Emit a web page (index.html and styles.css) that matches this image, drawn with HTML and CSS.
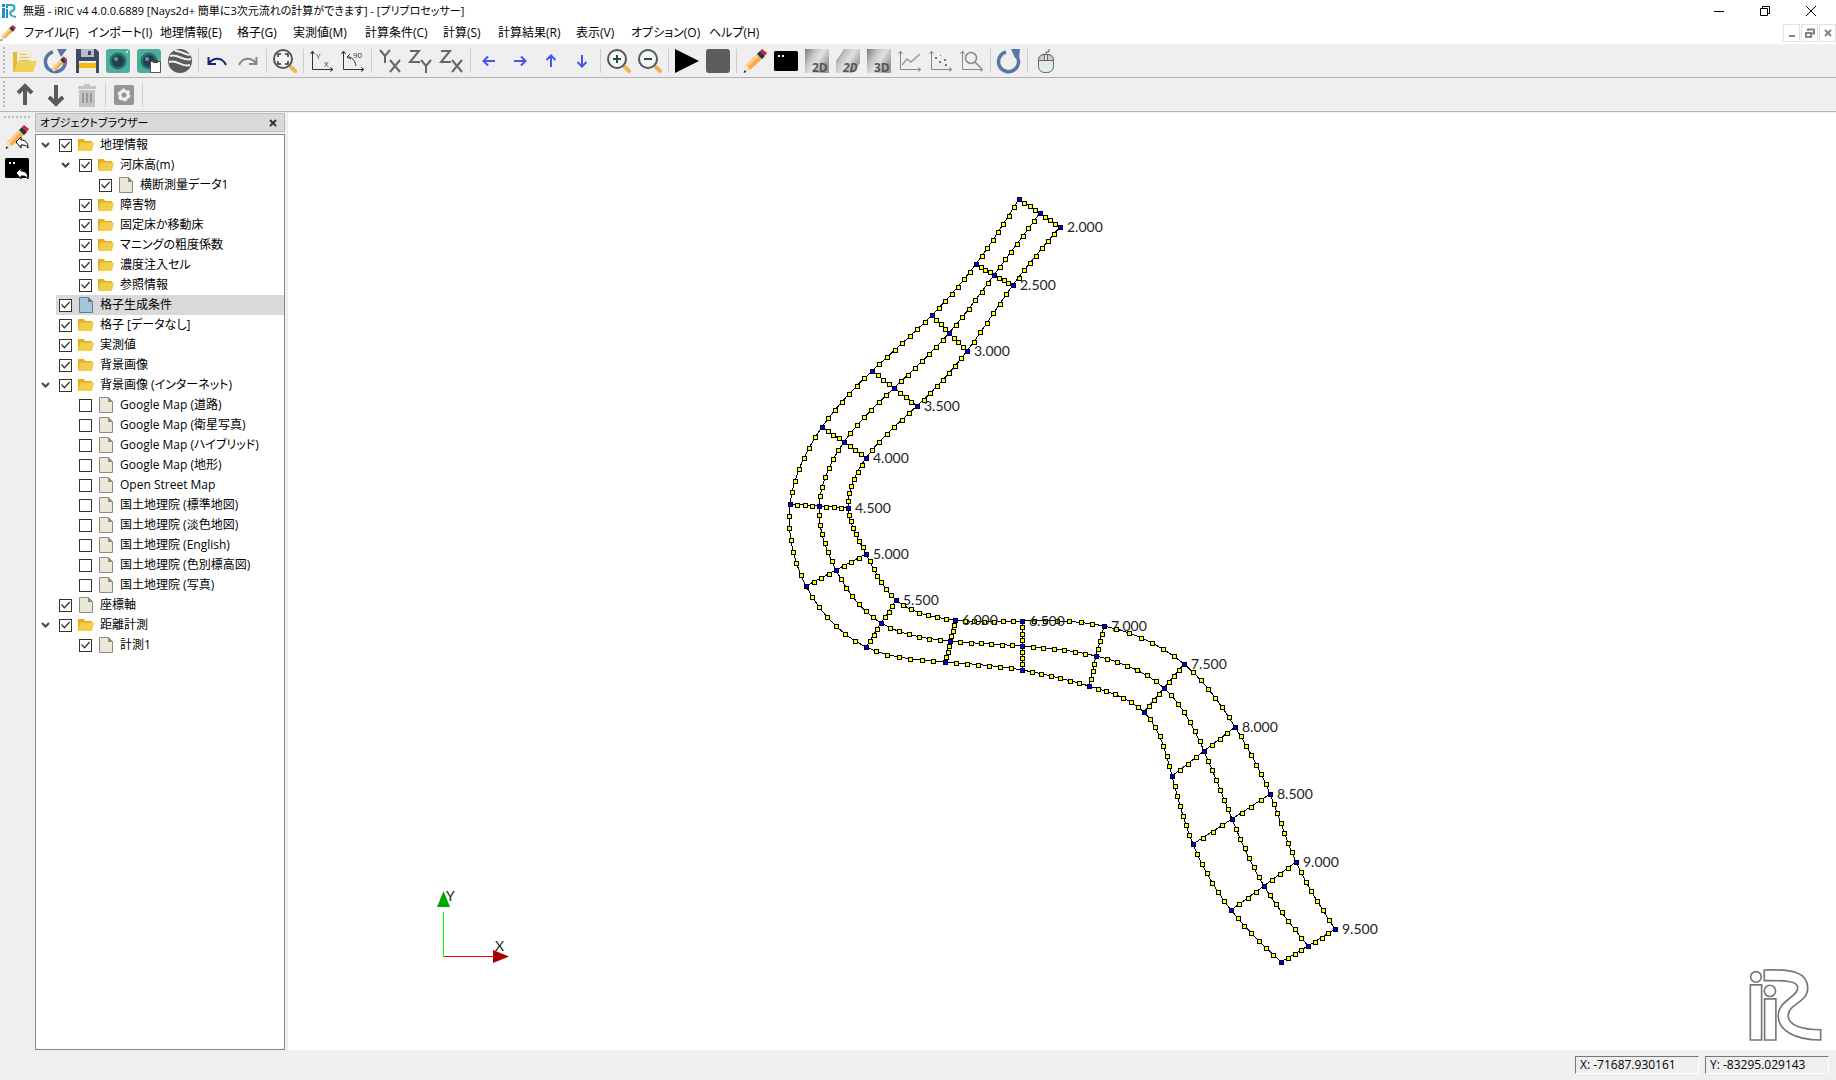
FILE: index.html
```html
<!DOCTYPE html>
<html lang="ja">
<head>
    <meta charset="UTF-8">
    <meta name="viewport" content="width=device-width, initial-scale=1.0">
    <title>無題 - iRIC v4</title>
    <link rel="stylesheet" href="styles.css">
</head>
<body>
    <!-- shared icons -->
    <svg class="defs" aria-hidden="true">
        <defs>
            <linearGradient id="metal" x1="0" y1="0" x2="1" y2="0.6">
                <stop offset="0" stop-color="#777"/><stop offset="0.35" stop-color="#c4c4c4"/>
                <stop offset="0.6" stop-color="#e2e2e2"/><stop offset="1" stop-color="#999"/>
            </linearGradient>
        </defs>
        <symbol id="i-folder" viewBox="0 0 16 16"><path fill="#e8b01c" d="M0 2h6l1 2h7v9H0z"/><path fill="#f0cd4a" d="M2.500 5.500H16L14 14H0z"/></symbol>
        <symbol id="i-file" viewBox="0 0 16 16"><path fill="#ece8d8" stroke="#8c8c80" d="M1.500.5h9l4 4v11h-13z"/><path fill="#8c8c80" d="M10 0l5 5h-5z"/></symbol>
        <symbol id="i-file-blue" viewBox="0 0 16 16"><path fill="#a5c5da" stroke="#5c7f94" d="M1.500.5h9l4 4v11h-13z"/><path fill="#5c7f94" d="M10 0l5 5h-5z"/></symbol>
        <symbol id="i-pencil" viewBox="0 0 24 24"><path fill="#f7ad4c" d="M14.500 4.500l5 5L7 21l-5-4z"/><path fill="#ffd08a" d="M14.500 4.500l2 2L4 19l-2-2z"/><path fill="#f3dfc4" d="M3 16l4 5-6 3z"/><path fill="#183850" d="M1.500 21l2 2-3 1zM14 5l3-3 5 5-3 3z"/><path fill="#d51f2c" d="M17 2l2-2 5 4-2.500 3z"/></symbol>
        <symbol id="i-console" viewBox="0 0 24 24"><rect y="2" width="24" height="20" rx="1.500" fill="#000"/><path fill="#fff" d="M4 6h2v2H4zM8 6h2v2H8z"/></symbol>
        <symbol id="i-zoom" viewBox="0 0 24 24"><path stroke="#f2b25a" stroke-width="4" stroke-linecap="round" d="M18 18l4 4"/><circle cx="10" cy="10" r="9" fill="#f6f6f6" stroke="#555" stroke-width="2"/></symbol>
        <symbol id="i-axes" viewBox="0 0 24 24"><path fill="none" stroke="currentColor" d="M2.500 3v17.500H22M.5 5l2-3 2 3M20 18.500l3 2-3 2"/></symbol>
        <symbol id="i-logo" viewBox="0 0 16 16"><path fill="#1c8fc4" d="M1 1h3v3H1zM1 5h3v10H1zM5 3h2v2H5zM5 6h2v9H5z"/><path fill="none" stroke="#2ba3bd" stroke-width="2" d="M5 2h5c5 0 4 5 1 6s-3 5 4 6"/></symbol>
    </svg>

    <div class="window">
        <header class="titlebar">
            <svg class="small-icon"><use href="#i-logo"/></svg>
            <h1>無題 - iRIC v4 4.0.0.6889 [Nays2d+ 簡単に3次元流れの計算ができます] - [プリプロセッサー]</h1>
            <div class="window-buttons">
                <button aria-label="最小化"><svg viewBox="0 0 10 10"><path d="M0 5.500h10"/></svg></button>
                <button aria-label="元に戻す"><svg viewBox="0 0 10 10"><path d="M.5 2.500h7v7h-7zM2.500 2V.5h7v7H8"/></svg></button>
                <button aria-label="閉じる"><svg viewBox="0 0 10 10"><path d="M0 0l10 10M10 0L0 10"/></svg></button>
            </div>
        </header>

        <nav class="menubar">
            <svg class="small-icon"><use href="#i-pencil"/></svg>
            <button>ファイル(F)</button>
            <button>インポート(I)</button>
            <button>地理情報(E)</button>
            <button>格子(G)</button>
            <button>実測値(M)</button>
            <button>計算条件(C)</button>
            <button>計算(S)</button>
            <button>計算結果(R)</button>
            <button>表示(V)</button>
            <button>オプション(O)</button>
            <button>ヘルプ(H)</button>
            <div class="mdi-buttons">
                <button aria-label="最小化"><svg viewBox="0 0 10 10"><path d="M2 8h6"/></svg></button>
                <button aria-label="元に戻す"><svg viewBox="0 0 10 10"><path d="M1 5h5v4H1zM3 3V1.500h6v4H7"/></svg></button>
                <button aria-label="閉じる"><svg viewBox="0 0 10 10"><path d="M2 2l6 6M8 2L2 8"/></svg></button>
            </div>
        </nav>

        <div class="toolbar">
            <span class="grip"></span>
            <button aria-label="開く"><svg viewBox="0 0 24 24"><path fill="#e6b93c" d="M0 3h5l2 2v18H0z"/><path fill="#f6eccb" d="M4 1h11l4 4v12H4z"/><path stroke="#cbbf97" d="M7 5.500h6M7 8.500h9M7 11.500h9"/><path fill="#f2d253" d="M5 12h19l-4 11H1z"/></svg></button>
            <button aria-label="再読込"><svg viewBox="0 0 24 24"><path fill="none" stroke="#5976a8" stroke-width="3.500" d="M9 3a10 10 0 1 0 12 7"/><path fill="#5976a8" d="M13 0h10l-6 8z"/><use href="#i-pencil" x="7" y="7" width="16" height="17"/></svg></button>
            <button aria-label="保存"><svg viewBox="0 0 24 24"><path fill="#3e4a63" d="M1 0h20l3 3v21H1z"/><path fill="#b9bec4" d="M6 0h13v8H6z"/><path fill="#3e4a63" d="M13 2h3v4h-3z"/><path fill="#eee" d="M4 12h17v12H4z"/><path fill="#efb916" d="M4 14h17v5H4z"/></svg></button>
            <button aria-label="スナップショット"><svg viewBox="0 0 24 24"><rect width="24" height="24" rx="3" fill="#4dae99"/><circle cx="12" cy="12" r="8.500" fill="#28706c"/><circle cx="12" cy="12" r="6" fill="#213f50"/><circle cx="10" cy="10" r="2" fill="#7894a0"/><circle cx="21" cy="3" r="1" fill="#fff"/></svg></button>
            <button aria-label="スナップショットをコピー"><svg viewBox="0 0 24 24"><rect width="24" height="24" rx="3" fill="#4dae99"/><circle cx="12" cy="12" r="8.500" fill="#28706c"/><circle cx="12" cy="12" r="6" fill="#213f50"/><circle cx="10" cy="10" r="2" fill="#7894a0"/><path fill="#fff" stroke="#555" d="M13.500 12.500h10v11h-10z"/><path fill="#444" d="M16 11h5v3h-5z"/></svg></button>
            <button aria-label="Google Earth"><svg viewBox="0 0 24 24"><circle cx="12" cy="12" r="12" fill="#5b5b5b"/><path fill="none" stroke="#efefef" stroke-width="2" d="M2 7c7-3 14 6 21 3M1 13c8-3 14 6 21 3M7 2c6-1 8 4 15 4"/></svg></button>
            <span class="sep"></span>
            <button aria-label="元に戻す"><svg viewBox="0 0 24 24"><path fill="none" stroke="#15277c" stroke-width="2" d="M4 14c5-6 13-6 17 2M3.500 8v7H11"/></svg></button>
            <button aria-label="やり直し"><svg viewBox="0 0 24 24"><path fill="none" stroke="#888" stroke-width="2" d="M20 14C15 8 7 8 3 16M20.500 8v7H13"/></svg></button>
            <span class="sep"></span>
            <button aria-label="全体表示"><svg viewBox="0 0 24 24"><use href="#i-zoom"/><path fill="none" stroke="#333" stroke-width="1.500" d="M5 8V5h3M12 5h3v3M15 12v3h-3M8 15H5v-3"/></svg></button>
            <span class="sep"></span>
            <button aria-label="XY"><svg class="dark" viewBox="0 0 24 24"><use href="#i-axes"/><text x="6" y="10">Y</text><text x="14" y="18">X</text></svg></button>
            <button aria-label="90度回転"><svg class="dark" viewBox="0 0 24 24"><use href="#i-axes"/><text x="12" y="9">90</text><path fill="none" stroke="#333" d="M6 8c5-1 8 4 9 9M9 5L6 8l4 2"/></svg></button>
            <span class="sep"></span>
            <button aria-label="YX"><svg viewBox="0 0 24 24"><path class="plane" d="M2 1l5 6 5-6M7 7v7M12 11l10 12M22 11L12 23"/></svg></button>
            <button aria-label="ZY"><svg viewBox="0 0 24 24"><path class="plane" d="M1 2h9L1 13h10M12 11l5 6 5-6M17 17v7"/></svg></button>
            <button aria-label="ZX"><svg viewBox="0 0 24 24"><path class="plane" d="M1 2h9L1 13h10M12 11l10 12M22 11L12 23"/></svg></button>
            <span class="sep"></span>
            <button aria-label="左"><svg viewBox="0 0 24 24"><path class="move" d="M18 12H7M11 7.500L6.500 12l4.500 4.500"/></svg></button>
            <button aria-label="右"><svg viewBox="0 0 24 24"><path class="move" d="M6 12h11M13 7.500l4.500 4.500-4.500 4.500"/></svg></button>
            <button aria-label="上"><svg viewBox="0 0 24 24"><path class="move" d="M12 18V7M7.500 11L12 6.500l4.500 4.500"/></svg></button>
            <button aria-label="下"><svg viewBox="0 0 24 24"><path class="move" d="M12 6v11M7.500 13l4.500 4.500 4.500-4.500"/></svg></button>
            <span class="sep"></span>
            <button aria-label="拡大"><svg viewBox="0 0 24 24"><use href="#i-zoom"/><path stroke="#1d4c50" stroke-width="2" d="M6 10h8M10 6v8"/></svg></button>
            <button aria-label="縮小"><svg viewBox="0 0 24 24"><use href="#i-zoom"/><path stroke="#1d4c50" stroke-width="2" d="M6 10h8"/></svg></button>
            <span class="sep"></span>
            <button aria-label="実行"><svg viewBox="0 0 24 24"><path d="M0 0l24 12L0 24z"/></svg></button>
            <button aria-label="停止"><svg viewBox="0 0 24 24"><rect width="24" height="24" rx="3" fill="#5c5c5c"/></svg></button>
            <span class="sep"></span>
            <button aria-label="プリプロセッサー"><svg><use href="#i-pencil"/></svg></button>
            <button aria-label="コンソール"><svg><use href="#i-console"/></svg></button>
            <button aria-label="2D表示"><svg viewBox="0 0 24 24"><path fill="url(#metal)" d="M0 0h24v24H0z"/><text class="dim" x="7" y="23">2D</text></svg></button>
            <button aria-label="鳥瞰図表示"><svg viewBox="0 0 24 24"><path fill="url(#metal)" d="M8 0h16v14L16 24H0V12z"/><text class="dim slant" x="7" y="23">2D</text></svg></button>
            <button aria-label="3D表示"><svg viewBox="0 0 24 24"><path fill="url(#metal)" d="M0 0h24v24H0z"/><text class="dim" x="7" y="23">3D</text></svg></button>
            <button aria-label="グラフ"><svg class="light" viewBox="0 0 24 24"><use href="#i-axes"/><path fill="none" stroke="#999" stroke-width="1.500" d="M4 16l5-6 4 3 9-8"/></svg></button>
            <button aria-label="散布図"><svg class="light" viewBox="0 0 24 24"><use href="#i-axes"/><path fill="#777" d="M6 8h2v2H6zM10 12h2v2h-2zM15 10h2v2h-2zM16 15h2v2h-2zM11 6h1v1h-1z"/></svg></button>
            <button aria-label="検証"><svg class="light" viewBox="0 0 24 24"><use href="#i-axes"/><circle cx="11" cy="9" r="5.500" fill="none" stroke="#888" stroke-width="1.500"/><path stroke="#888" stroke-width="1.500" d="M15 13l6 6"/></svg></button>
            <span class="sep"></span>
            <button aria-label="更新"><svg viewBox="0 0 24 24"><path fill="none" stroke="#5976a8" stroke-width="3.500" d="M9 3a10 10 0 1 0 10 3"/><path fill="#5976a8" d="M14 0h9l-1 9h-4z"/></svg></button>
            <span class="sep"></span>
            <button aria-label="マウス"><svg viewBox="0 0 24 24"><rect x="4.500" y="5.500" width="15" height="18" rx="6" fill="#e3eaea" stroke="#666"/><path fill="#c9cfcf" stroke="#666" d="M4.500 11.500c0-4 2-6 7.500-6s7.500 2 7.500 6zM10.500 5v6.500h3V5"/><path fill="none" stroke="#555" d="M12 5V3h3V0"/></svg></button>
        </div>

        <div class="toolbar">
            <span class="grip"></span>
            <button aria-label="上へ移動"><svg viewBox="0 0 24 24"><path class="bold-arrow" d="M12 22V4M5 10l7-7 7 7"/></svg></button>
            <button aria-label="下へ移動"><svg viewBox="0 0 24 24"><path class="bold-arrow" d="M12 2v18M5 14l7 7 7-7"/></svg></button>
            <button aria-label="削除" disabled><svg viewBox="0 0 24 24"><path fill="#c3c3c3" d="M3 3h6V1h6v2h6v3H3zM4 7h16v17H4z"/><path stroke="#999" stroke-width="2" d="M8 10v10M12 10v10M16 10v10"/></svg></button>
            <span class="sep"></span>
            <button aria-label="設定" disabled><svg viewBox="0 0 24 24"><rect x="2" y="2" width="20" height="20" rx="2" fill="#959595"/><circle cx="12" cy="12" r="4" fill="none" stroke="#efefef" stroke-width="3"/><circle cx="12" cy="12" r="5.500" fill="none" stroke="#efefef" stroke-width="2" stroke-dasharray="3 2.760"/></svg></button>
            <span class="sep"></span>
        </div>

        <div class="workspace">
            <aside class="side-toolbar">
                <span class="grip-h"></span>
                <button aria-label="プリプロセッサーに戻る"><svg viewBox="0 0 24 24"><use href="#i-pencil" width="24" height="24"/><path fill="#fff" stroke="#000" d="M11 17l5-5v3c5 0 7 3 7 8-2-3-4-3-7-3v3z"/></svg></button>
                <button aria-label="コンソールに戻る"><svg viewBox="0 0 24 24"><use href="#i-console" width="24" height="24"/><path fill="#fff" stroke="#000" d="M11 17l5-5v3c5 0 7 3 7 8-2-3-4-3-7-3v3z"/></svg></button>
            </aside>

            <section class="dock">
                <div class="dock-title">
                    <h2>オブジェクトブラウザー</h2>
                    <button aria-label="閉じる"><svg viewBox="0 0 8 8"><path d="M1 1l6 6M7 1L1 7"/></svg></button>
                </div>
                <ul class="tree" id="tree"></ul>
            </section>

            <main class="view">
                <svg class="grid-canvas" id="grid"></svg>
                <svg class="axes" viewBox="0 0 80 80">
                    <path stroke="#0f0" d="M7.500 22v45"/><path fill="#0a0" d="M7.500 1L14 17H1z"/>
                    <path stroke="red" d="M8 66.500h50"/><path fill="#a00" d="M57 60v13l16-6.500z"/>
                    <text x="10" y="11">Y</text><text x="59" y="61">X</text>
                </svg>
                <svg class="iric" viewBox="626 50 224 226">
                    <circle cx="649" cy="80" r="16"/><path d="M632 104h34v166h-34z"/>
                    <circle cx="691" cy="122" r="17"/><path d="M675 146h34v124h-34z"/>
                    <path d="M674 59C760 56 805 66 805 114C805 158 746 160 746 197C746 225 786 239 844 239V270C764 270 716 240 716 197C716 151 775 141 775 112C775 92 735 90 674 91z"/>
                </svg>
            </main>
        </div>

        <footer class="statusbar">
            <output>X: -71687.930161</output>
            <output>Y: -83295.029143</output>
        </footer>
    </div>
    <script src="script.js"></script>
</body>
</html>
```
FILE: styles.css
```css
:root {
    --face: #efefef;
    --line: #b4b4b4;
    --ui-font: "Open Sans", "Noto Sans CJK JP", sans-serif;
}

* {
    box-sizing: border-box;
}

body {
    margin: 0;
    background: var(--face);
    color: #000;
    font-family: var(--ui-font);
    font-size: 12px;
    font-feature-settings: "palt";
}

button {
    padding: 0;
    border: 0;
    background: none;
    color: inherit;
    font: inherit;
    font-feature-settings: inherit;
    flex: none;
}

svg {
    display: block;
    fill: none;
}

.defs {
    position: absolute;
    width: 0;
    height: 0;
}

.window {
    display: flex;
    flex-direction: column;
    height: 100vh;
    overflow: hidden;
}

.small-icon {
    width: 16px;
    height: 16px;
    flex: none;
}

/* title and menus */
.titlebar {
    display: flex;
    align-items: center;
    gap: 6px;
    height: 22px;
    padding-left: 1px;
    background: #fff;
}

h1, h2 {
    margin: 0;
    font-size: 11px;
    font-weight: normal;
    line-height: 20px;
    white-space: nowrap;
}

.window-buttons {
    display: flex;
    margin-left: auto;
    padding-right: 2px;
}

.window-buttons button {
    display: grid;
    place-items: center;
    width: 46px;
    height: 20px;
}

.window-buttons svg {
    width: 10px;
    height: 10px;
    stroke: #000;
}

.menubar {
    display: grid;
    grid-template-columns: 24px 64px 72px 77px 56px 72px 78px 55px 78px 55px 78px 60px 1fr;
    align-items: center;
    height: 23px;
    background: #fff;
    border-bottom: 1px solid #f2f2f2;
}

.menubar > button {
    line-height: 20px;
    text-align: left;
    white-space: nowrap;
}

.mdi-buttons {
    display: flex;
    gap: 1px;
    justify-self: end;
}

.mdi-buttons button {
    display: grid;
    place-items: center;
    width: 17px;
    height: 18px;
    border: 1px solid #e2e2e2;
}

.mdi-buttons svg {
    width: 10px;
    height: 10px;
    stroke: #788796;
    stroke-width: 2;
}

/* toolbars */
.toolbar {
    display: flex;
    align-items: center;
    height: 34px;
    padding-left: 3px;
    background: var(--face);
    border-bottom: 1px solid var(--line);
}

.menubar + .toolbar {
    height: 33px;
}

.toolbar svg {
    width: 24px;
    height: 24px;
    fill: #000;
    overflow: visible;
}

.toolbar button {
    display: grid;
    place-items: center;
    width: 31px;
    height: 32px;
}

.grip {
    width: 2px;
    height: 28px;
    margin-right: 4px;
    background: repeating-linear-gradient(#bbb 0 2px, transparent 2px 4px);
}

.sep {
    width: 6px;
    height: 24px;
    background: linear-gradient(#cdcdcd, #cdcdcd) center / 1px 100% no-repeat;
}

.dark {
    color: #333;
}

.light {
    color: #888;
}

.toolbar text {
    font: 8px "Open Sans", sans-serif;
    fill: #333;
}

.toolbar .dim {
    font: bold 12px "Open Sans", sans-serif;
    fill: #555;
}

.toolbar .slant {
    font-style: italic;
}

.plane {
    fill: none;
    stroke: #666;
    stroke-width: 2;
}

.move {
    fill: none;
    stroke: #4257ee;
    stroke-width: 2;
}

.bold-arrow {
    fill: none;
    stroke: #5a5a5a;
    stroke-width: 4;
}

/* workspace */
.workspace {
    display: flex;
    flex: 1;
    min-height: 0;
    padding-top: 1px;
}

.side-toolbar {
    display: flex;
    flex-direction: column;
    width: 35px;
    padding: 3px 0 0 1px;
}

.side-toolbar button {
    display: grid;
    place-items: center;
    width: 32px;
    height: 31px;
}

.side-toolbar svg {
    width: 24px;
    height: 24px;
}

.grip-h {
    width: 28px;
    height: 2px;
    margin: 0 0 3px 3px;
    background: repeating-linear-gradient(90deg, #bbb 0 2px, transparent 2px 4px);
}

.dock {
    display: flex;
    flex-direction: column;
    width: 250px;
    margin-right: 3px;
}

.dock-title {
    display: flex;
    align-items: center;
    justify-content: space-between;
    height: 19px;
    margin-bottom: 2px;
    padding: 0 7px 0 4px;
    background: #d9d9d9;
    border: 1px solid #bbb;
}

.dock-title svg {
    width: 8px;
    height: 8px;
    stroke: #333;
    stroke-width: 2;
}

.tree {
    flex: 1;
    margin: 0;
    padding: 0;
    overflow: hidden;
    background: #fff;
    border: 1px solid #828790;
    list-style: none;
}

.tree ul {
    margin: 0;
    padding-left: 20px;
    list-style: none;
}

.row {
    display: flex;
    height: 20px;
}

.toggle {
    display: grid;
    place-items: center;
    width: 20px;
    height: 20px;
    padding-right: 2px;
}

.toggle svg {
    width: 9px;
    height: 6px;
    stroke: #444;
    stroke-width: 2;
}

.item {
    display: flex;
    flex: 1;
    align-items: center;
    gap: 6px;
    padding-left: 3px;
    line-height: 20px;
    white-space: nowrap;
}

.item.selected {
    background: #d9d9d9;
}

.item svg {
    width: 16px;
    height: 16px;
}

.item input {
    appearance: none;
    width: 13px;
    height: 13px;
    margin: 0;
    background: #fff;
    border: 1px solid #333;
}

.item input:checked::before {
    content: "";
    display: block;
    width: 11px;
    height: 11px;
    background: #333;
    clip-path: polygon(10% 50%, 18% 42%, 40% 66%, 84% 18%, 92% 27%, 40% 83%);
}

/* drawing area */
.view {
    position: relative;
    flex: 1;
    overflow: hidden;
    background: #fff;
}

.grid-canvas {
    width: 100%;
    height: 100%;
}

.grid-canvas path {
    fill: none;
    stroke: #000;
    shape-rendering: crispEdges;
}

.grid-canvas rect {
    width: 4px;
    height: 4px;
    fill: #ff0;
    stroke: #000;
    shape-rendering: crispEdges;
}

.grid-canvas .node {
    fill: #00f;
}

.grid-canvas text,
.axes text {
    font: 14px Lato, sans-serif;
    fill: #222;
}

.axes {
    position: absolute;
    left: 148px;
    bottom: 80px;
    width: 80px;
    height: 80px;
}

.iric {
    position: absolute;
    right: 13px;
    bottom: 8px;
    width: 75px;
    height: 75px;
    stroke: #777;
    stroke-width: 5;
}

.statusbar {
    display: flex;
    align-items: center;
    justify-content: flex-end;
    gap: 6px;
    height: 30px;
    padding-right: 7px;
}

.statusbar output {
    width: 124px;
    height: 18px;
    padding-left: 4px;
    border: 1px solid;
    border-color: #777 #fff #fff #777;
    line-height: 16px;
}
```
FILE: script.js
```js
// object browser: [label, icon, checked, children]
const items = [
    ['地理情報', 'folder', 1, [
        ['河床高(m)', 'folder', 1, [['横断測量データ1', 'file', 1]]],
        ['障害物', 'folder', 1],
        ['固定床か移動床', 'folder', 1],
        ['マニングの粗度係数', 'folder', 1],
        ['濃度注入セル', 'folder', 1],
        ['参照情報', 'folder', 1]
    ]],
    ['格子生成条件', 'file-blue', 1],
    ['格子 [データなし]', 'folder', 1],
    ['実測値', 'folder', 1],
    ['背景画像', 'folder', 1],
    ['背景画像 (インターネット)', 'folder', 1, [
        ['Google Map (道路)', 'file', 0],
        ['Google Map (衛星写真)', 'file', 0],
        ['Google Map (ハイブリッド)', 'file', 0],
        ['Google Map (地形)', 'file', 0],
        ['Open Street Map', 'file', 0],
        ['国土地理院 (標準地図)', 'file', 0],
        ['国土地理院 (淡色地図)', 'file', 0],
        ['国土地理院 (English)', 'file', 0],
        ['国土地理院 (色別標高図)', 'file', 0],
        ['国土地理院 (写真)', 'file', 0]
    ]],
    ['座標軸', 'file', 1],
    ['距離計測', 'folder', 1, [['計測1', 'file', 1]]]
];

let nextId = 0;
function treeHtml(list) {
    return list.map(([label, icon, checked, children]) => {
        const id = 'item' + nextId++;
        const toggle = children
            ? '<button class="toggle" aria-label="折りたたむ"><svg viewBox="0 0 9 6"><path d="M1 1l3.500 3.500L8 1"/></svg></button>'
            : '<span class="toggle"></span>';
        return `<li><div class="row">${toggle}
            <div class="item${icon === 'file-blue' ? ' selected' : ''}">
                <input type="checkbox" id="${id}"${checked ? ' checked' : ''}>
                <svg><use href="#i-${icon}"/></svg>
                <label for="${id}">${label}</label>
            </div></div>${children ? `<ul>${treeHtml(children)}</ul>` : ''}</li>`;
    }).join('');
}
document.getElementById('tree').innerHTML = treeHtml(items);

// cross sections: left bank, centre, right bank, divisions to the next section
const sections = [
    [[731, 86], [752, 100], [772, 114], 8],
    [[688, 151], [706, 162], [725, 172], 7],
    [[644, 202], [661, 220], [679, 238], 8],
    [[584, 258], [606, 275], [629, 293], 7],
    [[534, 314], [556, 329], [578, 345], 7],
    [[502, 391], [531, 393], [560, 395], 7],
    [[518, 473], [548, 457], [578, 441], 7],
    [[578, 534], [593, 510], [608, 487], 7],
    [[657, 549], [662, 528], [667, 507], 7],
    [[734, 557], [734, 533], [734, 508], 7],
    [[801, 573], [808, 543], [816, 513], 7],
    [[856, 599], [876, 575], [896, 551], 7],
    [[884, 663], [916, 638], [947, 614], 7],
    [[905, 731], [944, 706], [982, 681], 7],
    [[943, 797], [976, 773], [1008, 749], 7],
    [[993, 849], [1020, 833], [1047, 816], 0]
];

// second derivatives of a natural cubic spline
function secondDerivatives(t, v) {
    const n = v.length;
    const m = new Array(n).fill(0), c = new Array(n).fill(0), d = new Array(n).fill(0);
    for (let i = 1; i < n - 1; i++) {
        const a = t[i] - t[i - 1], b = t[i + 1] - t[i];
        const w = 2 * (a + b) - a * c[i - 1];
        c[i] = b / w;
        d[i] = (6 * ((v[i + 1] - v[i]) / b - (v[i] - v[i - 1]) / a) - a * d[i - 1]) / w;
    }
    for (let i = n - 2; i > 0; i--) m[i] = d[i] - c[i] * m[i + 1];
    return m;
}

function valueAt(t, v, m, i, s) {
    const h = t[i + 1] - t[i], r = 1 - s;
    return r * v[i] + s * v[i + 1] + h * h / 6 * ((r ** 3 - r) * m[i] + (s ** 3 - s) * m[i + 1]);
}

let lines = '', marks = '', nodes = '', labels = '';

function mark(x, y, name) {
    return `<rect class="${name}" x="${Math.round(x) - 1.5}" y="${Math.round(y) - 1.5}"/>`;
}

for (let k = 0; k < 3; k++) {
    const pts = sections.map(s => s[k]);
    const t = [0];
    for (let i = 1; i < pts.length; i++) {
        t.push(t[i - 1] + Math.hypot(pts[i][0] - pts[i - 1][0], pts[i][1] - pts[i - 1][1]));
    }
    const xs = pts.map(p => p[0]), ys = pts.map(p => p[1]);
    const mx = secondDerivatives(t, xs), my = secondDerivatives(t, ys);
    let path = `M${pts[0]}`;
    for (let i = 0; i < pts.length - 1; i++) {
        const n = sections[i][3];
        for (let j = 1; j <= n; j++) {
            const x = valueAt(t, xs, mx, i, j / n), y = valueAt(t, ys, my, i, j / n);
            path += `L${x} ${y}`;
            if (j < n) marks += mark(x, y, 'point');
        }
    }
    lines += `<path d="${path}"/>`;
}

sections.forEach((s, i) => {
    lines += `<path d="M${s[0]}L${s[1]}L${s[2]}"/>`;
    for (let k = 0; k < 2; k++) {
        for (let j = 1; j < 4; j++) {
            marks += mark(s[k][0] + (s[k + 1][0] - s[k][0]) * j / 4, s[k][1] + (s[k + 1][1] - s[k][1]) * j / 4, 'point');
        }
    }
    for (let k = 0; k < 3; k++) nodes += mark(s[k][0], s[k][1], 'node');
    labels += `<text x="${s[2][0] + 7}" y="${s[2][1] + 5}">${(2 + i / 2).toFixed(3)}</text>`;
});

document.getElementById('grid').innerHTML = lines + marks + nodes + labels;
```
